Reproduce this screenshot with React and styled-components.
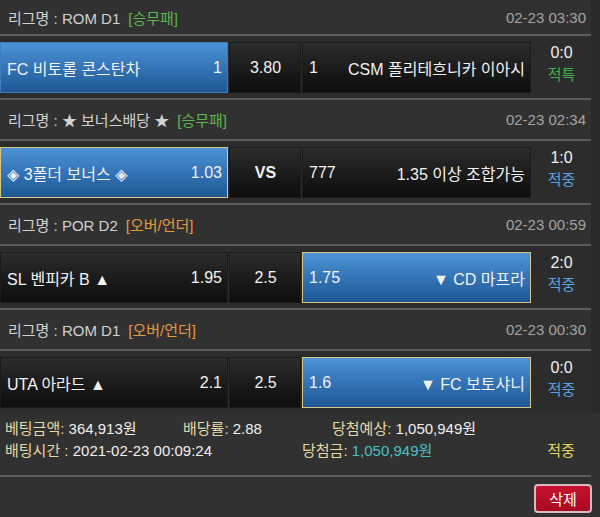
import React from 'react';
import styled, { createGlobalStyle } from 'styled-components';

const Global = createGlobalStyle`
  * { box-sizing: border-box; }
  html, body { margin: 0; padding: 0; background: #313131; }
  body { font-family: "Liberation Sans", "Noto Sans CJK KR", "DejaVu Sans", sans-serif; }
`;

const Page = styled.div`
  width: 600px;
  height: 517px;
  overflow: hidden;
  background: #313131;
`;

const ListArea = styled.div`
  display: flex;
`;

const List = styled.div`
  width: 591px;
`;

const Track = styled.div`
  flex: 1;
  background: #2a2a2a;
`;

const Header = styled.div`
  height: ${(p) => (p.$first ? 36 : 41)}px;
  display: flex;
  align-items: center;
  justify-content: space-between;
  padding: 0 5px 0 8px;
  background: #313131;
  border-bottom: 2px solid #5c5c5c;
  font-size: 15px;
  color: #d2d2d2;
`;

const League = styled.span`
  white-space: nowrap;
`;

const Type = styled.span`
  margin-left: 8px;
  color: ${(p) => p.$color};
`;

const DateText = styled.span`
  color: #a3a3a3;
`;

const Row = styled.div`
  height: ${(p) => (p.$last ? 62 : 64)}px;
  display: flex;
  align-items: flex-start;
  gap: 1px;
  padding-top: 6px;
  background: #2c2c2c;
  border-bottom: ${(p) => (p.$last ? 'none' : '2px solid #5c5c5c')};
`;

const Cell = styled.div`
  width: ${(p) => p.$w}px;
  height: 51px;
  display: flex;
  align-items: center;
  justify-content: ${(p) => (p.$center ? 'center' : 'space-between')};
  padding: 0 5px 0 6px;
  font-size: 16px;
  color: #f2f2f2;
  white-space: nowrap;
  background: ${(p) =>
    p.$blue
      ? 'linear-gradient(to bottom, #4c93d6 0%, #3474b6 50%, #1d5894 100%)'
      : 'linear-gradient(to bottom, #2d2d2d 0%, #1a1a1a 55%, #0e0e0e 100%)'};
  border: 1px solid
    ${(p) => (p.$gold ? '#d8c784' : p.$blue ? '#3d7fbe' : '#1b1b1b')};
  font-weight: ${(p) => (p.$bold ? 700 : 400)};
`;

const Score = styled.div`
  flex: 1;
  display: flex;
  flex-direction: column;
  align-items: center;
  line-height: 22px;
  font-size: 16px;
  color: #f0f0f0;
`;

const Result = styled.span`
  font-size: 15px;
  color: ${(p) => p.$color};
`;

const Summary = styled.div`
  width: 591px;
  padding: 5px 0 13px 5px;
  background: #313131;
  border-bottom: 2px solid #5c5c5c;
  font-size: 15px;
  line-height: 22px;
  color: #f0f0f0;
`;

const SumRow = styled.div`
  display: flex;
`;

const SumCell = styled.div`
  width: ${(p) => (p.$w ? `${p.$w}px` : 'auto')};
  flex: ${(p) => (p.$w ? 'none' : 1)};
  text-align: ${(p) => (p.$center ? 'center' : 'left')};
  white-space: nowrap;
`;

const Label = styled.span`
  color: #e4d9a5;
`;

const Teal = styled.span`
  color: #46c2c4;
`;

const Yellow = styled.span`
  color: #e6d55c;
`;

const Footer = styled.div`
  height: 40px;
  display: flex;
  justify-content: flex-end;
  align-items: flex-start;
  padding: 7px 8px 0 0;
`;

const DeleteButton = styled.button`
  width: 58px;
  height: 29px;
  border: 2px solid #d9b9bd;
  border-radius: 4px;
  background: linear-gradient(to bottom, #c8122f, #a80a24);
  color: #ffffff;
  font-family: "Liberation Sans", "Noto Sans CJK KR", sans-serif;
  font-size: 15px;
  padding: 0;
`;

const GREEN = '#5db84d';
const ORANGE = '#e69a3c';
const BLUE_RES = '#5ba3e4';
const GREEN_RES = '#44ad4c';

const bets = [
  {
    league: 'ROM D1', type: '승무패', typeColor: GREEN, date: '02-23 03:30',
    home: 'FC 비토롤 콘스탄차', homeOdd: '1', mid: '3.80', awayOdd: '1',
    away: 'CSM 폴리테흐니카 이아시', pick: 'home', gold: false,
    score: '0:0', result: '적특', resultColor: GREEN_RES,
  },
  {
    league: '★ 보너스배당 ★', type: '승무패', typeColor: GREEN, date: '02-23 02:34',
    home: '◈ 3폴더 보너스 ◈', homeOdd: '1.03', mid: 'VS', bold: true, awayOdd: '777',
    away: '1.35 이상 조합가능', pick: 'home', gold: true,
    score: '1:0', result: '적중', resultColor: BLUE_RES,
  },
  {
    league: 'POR D2', type: '오버/언더', typeColor: ORANGE, date: '02-23 00:59',
    home: 'SL 벤피카 B ▲', homeOdd: '1.95', mid: '2.5', awayOdd: '1.75',
    away: '▼ CD 마프라', pick: 'away', gold: true,
    score: '2:0', result: '적중', resultColor: BLUE_RES,
  },
  {
    league: 'ROM D1', type: '오버/언더', typeColor: ORANGE, date: '02-23 00:30',
    home: 'UTA 아라드 ▲', homeOdd: '2.1', mid: '2.5', awayOdd: '1.6',
    away: '▼ FC 보토샤니', pick: 'away', gold: true,
    score: '0:0', result: '적중', resultColor: BLUE_RES,
  },
];

export default function App() {
  return (
    <Page>
      <Global />
      <ListArea>
        <List>
          {bets.map((b, i) => (
            <React.Fragment key={i}>
              <Header $first={i === 0}>
                <League>
                  리그명 : {b.league}
                  <Type $color={b.typeColor}>[{b.type}]</Type>
                </League>
                <DateText>{b.date}</DateText>
              </Header>
              <Row $last={i === bets.length - 1}>
                <Cell $w={228} $blue={b.pick === 'home'} $gold={b.pick === 'home' && b.gold}>
                  <span>{b.home}</span>
                  <span>{b.homeOdd}</span>
                </Cell>
                <Cell $w={72} $center $bold={b.bold}>
                  {b.mid}
                </Cell>
                <Cell $w={229} $blue={b.pick === 'away'} $gold={b.pick === 'away' && b.gold}>
                  <span>{b.awayOdd}</span>
                  <span>{b.away}</span>
                </Cell>
                <Score>
                  <span>{b.score}</span>
                  <Result $color={b.resultColor}>{b.result}</Result>
                </Score>
              </Row>
            </React.Fragment>
          ))}
        </List>
        <Track />
      </ListArea>
      <Summary>
        <SumRow>
          <SumCell $w={178}>
            <Label>베팅금액:</Label> 364,913원
          </SumCell>
          <SumCell $w={149}>
            <Label>배당률:</Label> 2.88
          </SumCell>
          <SumCell>
            <Label>당첨예상:</Label> 1,050,949원
          </SumCell>
        </SumRow>
        <SumRow>
          <SumCell $w={297}>
            <Label>배팅시간 :</Label> 2021-02-23 00:09:24
          </SumCell>
          <SumCell $w={229}>
            <Label>당첨금:</Label> <Teal>1,050,949원</Teal>
          </SumCell>
          <SumCell $w={60} $center>
            <Yellow>적중</Yellow>
          </SumCell>
        </SumRow>
      </Summary>
      <Footer>
        <DeleteButton>삭제</DeleteButton>
      </Footer>
    </Page>
  );
}
